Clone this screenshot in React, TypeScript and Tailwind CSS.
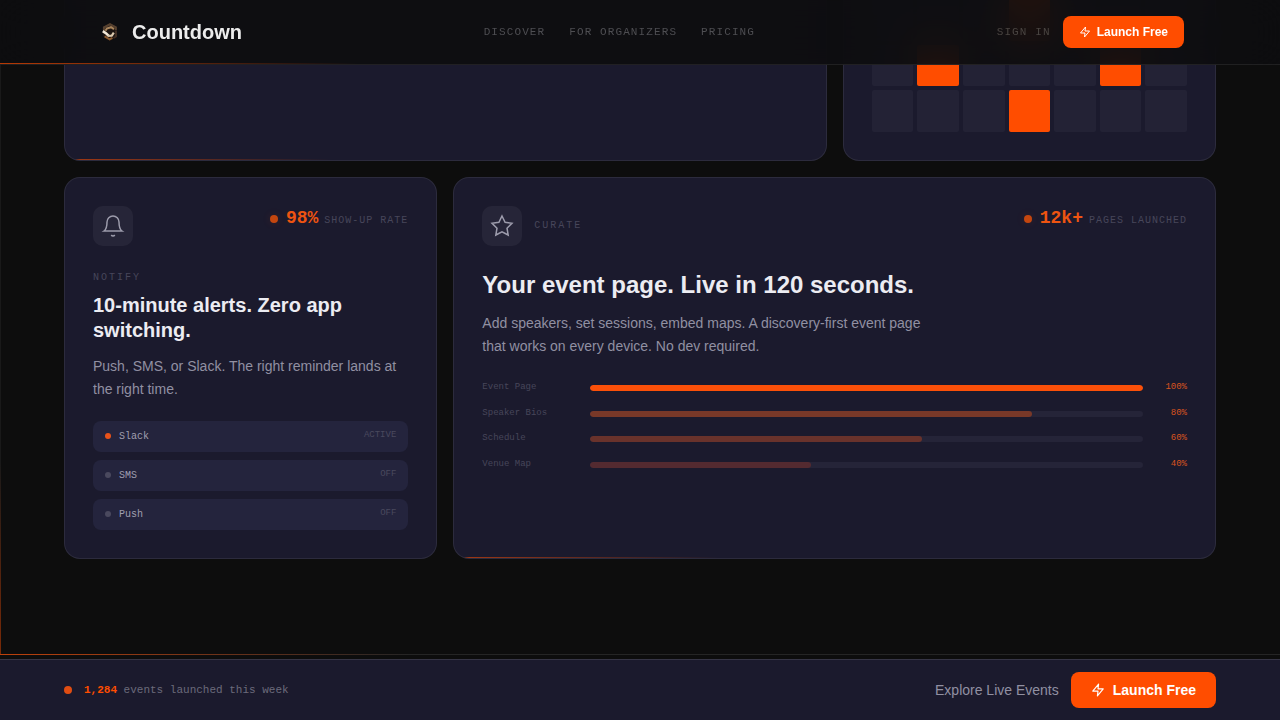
import React from 'react';

const sans = "font-['Liberation_Sans',Arial,sans-serif]";
const mono = "font-['Liberation_Mono','Courier_New',monospace]";

const navLinks = ['Discover', 'For Organizers', 'Pricing'];

// days of the heatmap that have an event on them
const busyDays = [3, 8, 12, 17];
const days = Array.from({ length: 21 }, (_, i) => i);

const channels = [
  { name: 'Slack', status: 'ACTIVE', dot: 'bg-[#e8521a]' },
  { name: 'SMS', status: 'OFF', dot: 'bg-[#4a495e]' },
  { name: 'Push', status: 'OFF', dot: 'bg-[#4a495e]' },
];

const progress = [
  { label: 'Event Page', value: 100, fill: 'bg-[#fb5009]' },
  { label: 'Speaker Bios', value: 80, fill: 'bg-[#783828]' },
  { label: 'Schedule', value: 60, fill: 'bg-[#69322b]' },
  { label: 'Venue Map', value: 40, fill: 'bg-[#532a30]' },
];

const Logo: React.FC = () => (
  <svg className="h-7 w-7" viewBox="0 0 28 28" fill="none" aria-hidden="true">
    <path d="M14 5 L21 9 V18.5 L14 23 L7 18.5 V9 Z" fill="#1c1411" />
    <path d="M8 12.5 V9.5 L14 6.2 L19.8 9.4 V12" stroke="#55402f" strokeWidth="2.2" />
    <path d="M20 12.5 V18.5 L17.5 20" stroke="#3f2c22" strokeWidth="2" />
    <path d="M9.5 12.8 L10.8 10.6 L15 9.2 L18 11.2" stroke="#a8845c" strokeWidth="2" />
    <path d="M6.8 13.2 L10.2 15.4 L12.4 17.6" stroke="#f3e8d8" strokeWidth="2.6" />
    <path d="M11.6 17.8 L15.8 17.6 L17.8 14.6" stroke="#dcc9ae" strokeWidth="2.2" />
    <path d="M8.6 18.4 L13.6 21.4 L16.4 19.8" stroke="#8a5a30" strokeWidth="2" />
  </svg>
);

const ZapIcon: React.FC<{ className: string }> = ({ className }) => (
  <svg
    className={className}
    viewBox="0 0 24 24"
    fill="none"
    stroke="currentColor"
    strokeWidth="2"
    strokeLinejoin="round"
    aria-hidden="true"
  >
    <path d="M13 2L3 14h9l-1 8 10-12h-9l1-8z" />
  </svg>
);

const BellIcon: React.FC = () => (
  <svg className="h-6 w-6" viewBox="0 0 24 24" fill="none" stroke="currentColor" strokeWidth="1.5" aria-hidden="true">
    <path d="M18 8A6 6 0 0 0 6 8c0 7-3 9-3 9h18s-3-2-3-9" />
    <path d="M13.73 21a2 2 0 0 1-3.46 0" />
  </svg>
);

const StarIcon: React.FC = () => (
  <svg className="h-6 w-6" viewBox="0 0 24 24" fill="none" stroke="currentColor" strokeWidth="1.5" aria-hidden="true">
    <path d="M12 2l3.09 6.26L22 9.27l-5 4.87 1.18 6.88L12 17.77l-6.18 3.25L7 14.14 2 9.27l6.91-1.01L12 2z" />
  </svg>
);

const Card: React.FC<{ className?: string; accent?: boolean; children?: React.ReactNode }> = ({
  className = '',
  accent,
  children,
}) => (
  <article
    className={`relative overflow-hidden rounded-2xl border border-white/8 bg-[#1b1a2d] p-7 ${className}`}
  >
    {children}
    {accent && (
      <div className="absolute inset-x-0 bottom-0 h-px bg-[linear-gradient(90deg,rgba(255,77,0,0.6),rgba(255,77,0,0)_35%)]" />
    )}
  </article>
);

const IconBox: React.FC<{ children: React.ReactNode }> = ({ children }) => (
  <div className="flex h-10 w-10 items-center justify-center rounded-[10px] bg-white/5 text-[#9c9bab]">
    {children}
  </div>
);

const Stat: React.FC<{ value: string; label: string }> = ({ value, label }) => (
  <div className={`flex items-center gap-2 ${mono}`}>
    <span className="h-2 w-2 rounded-full bg-[#c4460f] shadow-[0_0_8px_#ff4d0022]" />
    <p className="flex items-baseline gap-1.5 leading-6">
      <span className="text-lg leading-6 font-bold text-[#ee5411]">{value}</span>
      <span className="text-[10px] leading-6 tracking-[1px] text-[#47465a]">{label}</span>
    </p>
  </div>
);

const Header: React.FC = () => (
  <header className="fixed inset-x-0 top-0 z-10 border-b border-white/8 bg-[#0d0d0f]/92 backdrop-blur-[20px]">
    <div className="mx-auto flex h-16 max-w-6xl items-center justify-between px-8">
      <a href="#" className="flex items-center gap-2 text-xl font-bold text-[#ececec]">
        <Logo />
        Countdown
      </a>
      <nav className={`flex gap-6 text-[11px] tracking-widest text-[#4e4e52] uppercase ${mono}`}>
        {navLinks.map((link) => (
          <a key={link} href="#">
            {link}
          </a>
        ))}
      </nav>
      <div className="flex items-center gap-3">
        <a href="#" className={`text-[11px] tracking-widest text-[#4a4542] uppercase ${mono}`}>
          Sign in
        </a>
        <button className="flex h-8 items-center gap-1.5 rounded-lg bg-[#ff4d00] px-4 text-xs font-bold text-white">
          <ZapIcon className="h-3 w-3" />
          Launch Free
        </button>
      </div>
    </div>
    <div className="absolute inset-x-0 bottom-0 h-px bg-[linear-gradient(90deg,rgba(255,77,0,0.7),rgba(255,77,0,0)_28%)]" />
  </header>
);

const Calendar: React.FC = () => (
  <div className="grid grid-cols-7 gap-1">
    {days.map((day) => (
      <div
        key={day}
        className={`aspect-square rounded-[2px] ${busyDays.includes(day) ? 'bg-[#ff4d00]' : 'bg-[#232235]'}`}
      />
    ))}
  </div>
);

const NotifyCard: React.FC = () => (
  <Card>
    <div className="mb-6 flex items-start justify-between">
      <IconBox>
        <BellIcon />
      </IconBox>
      <Stat value="98%" label="SHOW-UP RATE" />
    </div>
    <p className={`mb-2 text-[10px] leading-[15px] tracking-[2px] text-[#47465a] ${mono}`}>NOTIFY</p>
    <h3 className="mb-3 text-xl leading-[25px] font-bold text-[#ececf2]">10-minute alerts. Zero app switching.</h3>
    <p className="mb-5 text-sm leading-[23px] text-[#9190a2]">
      Push, SMS, or Slack. The right reminder lands at the right time.
    </p>
    <ul className={`flex flex-col gap-2 ${mono}`}>
      {channels.map((channel) => (
        <li key={channel.name} className="flex items-start justify-between rounded-lg bg-[#24243d] px-3 py-2">
          <span className="flex items-center gap-2 text-[10px] leading-[15px] text-[#a09fb0]">
            <span className={`h-1.5 w-1.5 rounded-full ${channel.dot}`} />
            {channel.name}
          </span>
          <span className="text-[9px] leading-normal text-[#4a495e]">{channel.status}</span>
        </li>
      ))}
    </ul>
  </Card>
);

const CurateCard: React.FC = () => (
  <Card className="lg:col-span-2" accent>
    <div className="mb-6 flex items-start justify-between">
      <div className="flex items-center gap-3">
        <IconBox>
          <StarIcon />
        </IconBox>
        <p className={`text-[10px] leading-[15px] tracking-[2px] text-[#47465a] ${mono}`}>CURATE</p>
      </div>
      <Stat value="12k+" label="PAGES LAUNCHED" />
    </div>
    <h3 className="mb-3 text-2xl leading-[30px] font-bold text-[#ececf2]">Your event page. Live in 120 seconds.</h3>
    <p className="mb-6 max-w-md text-sm leading-relaxed text-[#9190a2]">
      Add speakers, set sessions, embed maps. A discovery-first event page that works on every device. No dev
      required.
    </p>
    <div className={`flex flex-col gap-3 text-[9px] leading-normal ${mono}`}>
      {progress.map((item) => (
        <div key={item.label} className="flex items-center gap-3">
          <span className="w-24 text-[#47465a]">{item.label}</span>
          <div className="h-1.5 flex-1 overflow-hidden rounded-full bg-[#252438]">
            <div className={`h-full rounded-full ${item.fill}`} style={{ width: `${item.value}%` }} />
          </div>
          <span className="w-8 text-right text-[#d9541f]">{item.value}%</span>
        </div>
      ))}
    </div>
  </Card>
);

const Footer: React.FC = () => (
  <footer className="fixed inset-x-0 bottom-0 z-10 flex items-center justify-between border-t border-white/12 bg-[#1b1a2d] px-16 py-3">
    <div className="flex items-center gap-3">
      <span className="h-2 w-2 rounded-full bg-[#e04d12]" />
      <p className={`text-[11px] text-[#6b6a7b] ${mono}`}>
        <strong className="text-[#ff4d00]">1,284</strong> events launched this week
      </p>
    </div>
    <div className="flex items-center gap-3">
      <a href="#" className="text-sm text-[#9190a2]">
        Explore Live Events
      </a>
      <button className="flex h-9 items-center gap-2 rounded-lg bg-[#ff4d00] px-5 text-sm font-bold text-white">
        <ZapIcon className="h-3.5 w-3.5" />
        Launch Free
      </button>
    </div>
  </footer>
);

export default function App() {
  return (
    <div className={`min-h-screen overflow-hidden bg-[#0d0d0d] ${sans}`}>
      <Header />
      <main>
        <section className="relative border-b border-white/10 px-16 pb-[95px]">
          <div className="-mt-[30px] grid grid-cols-1 gap-4 lg:grid-cols-3">
            <Card className="lg:col-span-2" accent />
            <Card>
              <Calendar />
            </Card>
            <NotifyCard />
            <CurateCard />
          </div>
          {/* glow running down the left edge and along the bottom */}
          <div className="absolute inset-y-0 left-0 w-px bg-[linear-gradient(0deg,rgba(255,77,0,0.45),rgba(255,255,255,0.05)_28%)]" />
          <div className="absolute inset-x-0 -bottom-px h-px bg-[linear-gradient(90deg,rgba(255,77,0,0.7),rgba(255,77,0,0)_32%)]" />
        </section>
      </main>
      <Footer />
    </div>
  );
}
